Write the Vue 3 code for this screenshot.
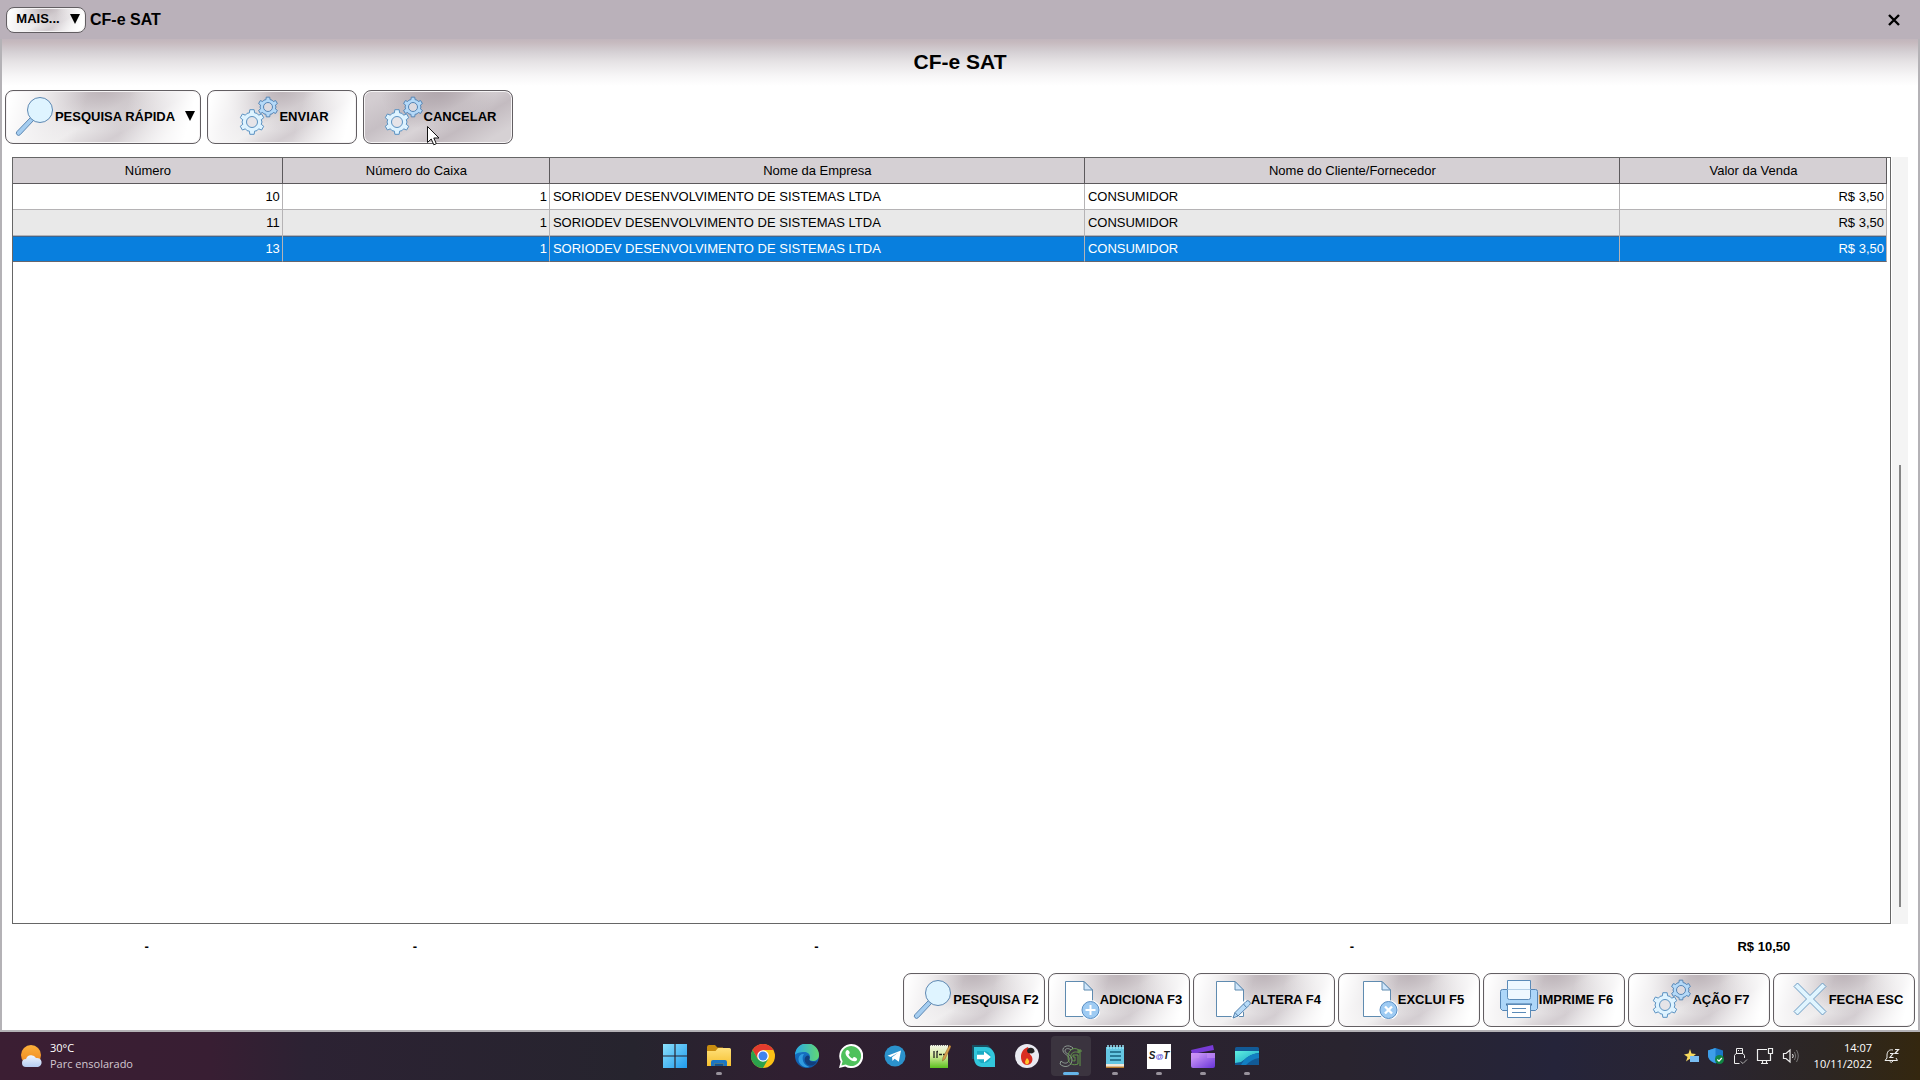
<script setup>
const gear = (cx, cy, r) => {
  const pts = []
  for (let i = 0; i < 6; i++) {
    const base = -90 + i * 60
    for (const [offset, radius] of [[-16, 0.76], [-10, 1], [10, 1], [16, 0.76], [30, 0.8]]) {
      const a = ((base + offset) * Math.PI) / 180
      pts.push(`${(cx + r * radius * Math.cos(a)).toFixed(2)} ${(cy + r * radius * Math.sin(a)).toFixed(2)}`)
    }
  }
  return `M${pts.join('L')}Z`
}

const bigGear = gear(15, 26, 12.5)
const smallGear = gear(31, 11, 10)

const columns = ['Número', 'Número do Caixa', 'Nome da Empresa', 'Nome do Cliente/Fornecedor', 'Valor da Venda']

const rows = [
  { numero: 10, caixa: 1, empresa: 'SORIODEV DESENVOLVIMENTO DE SISTEMAS LTDA', cliente: 'CONSUMIDOR', valor: 'R$ 3,50' },
  { numero: 11, caixa: 1, empresa: 'SORIODEV DESENVOLVIMENTO DE SISTEMAS LTDA', cliente: 'CONSUMIDOR', valor: 'R$ 3,50' },
  { numero: 13, caixa: 1, empresa: 'SORIODEV DESENVOLVIMENTO DE SISTEMAS LTDA', cliente: 'CONSUMIDOR', valor: 'R$ 3,50' },
]
const selected = 13

const totals = ['-', '-', '-', '-', 'R$ 10,50']

const actions = [
  { icon: 'search', label: 'PESQUISA F2' },
  { icon: 'add', label: 'ADICIONA F3' },
  { icon: 'edit', label: 'ALTERA F4' },
  { icon: 'remove', label: 'EXCLUI F5' },
  { icon: 'print', label: 'IMPRIME F6' },
  { icon: 'gears', label: 'AÇÃO F7' },
  { icon: 'close', label: 'FECHA ESC' },
]

const apps = [
  { icon: 'windows', title: 'Iniciar' },
  { icon: 'folder', title: 'Explorador de Arquivos', open: true },
  { icon: 'chrome', title: 'Chrome' },
  { icon: 'edge', title: 'Edge' },
  { icon: 'whatsapp', title: 'WhatsApp' },
  { icon: 'telegram', title: 'Telegram' },
  { icon: 'editor', title: 'Editor' },
  { icon: 'transfer', title: 'Transferir' },
  { icon: 'flame', title: 'Firebird' },
  { icon: 'sg', title: 'Sistema', active: true },
  { icon: 'notepad', title: 'Bloco de Notas', open: true },
  { icon: 'sat', title: 'SAT', open: true },
  { icon: 'clip', title: 'Clipchamp', open: true },
  { icon: 'desktop', title: 'Conexão', open: true },
]
</script>

<template>
  <div class="screen">
    <svg class="sprites" aria-hidden="true">
      <defs>
        <linearGradient id="win" x1="0" y1="0" x2="1" y2="1"><stop offset="0" stop-color="#8be0fb" /><stop offset="1" stop-color="#1f9bee" /></linearGradient>
        <linearGradient id="fold" x1="0" y1="0" x2="0" y2="1"><stop offset="0" stop-color="#ffe07a" /><stop offset="1" stop-color="#f6c02f" /></linearGradient>
        <linearGradient id="edgeA" x1="0" y1="0" x2="1" y2="0"><stop offset="0" stop-color="#28a8e8" /><stop offset="1" stop-color="#62d873" /></linearGradient>
        <linearGradient id="edgeB" x1="0" y1="0" x2="0" y2="1"><stop offset="0" stop-color="#1b7fd0" /><stop offset="1" stop-color="#0d57a6" /></linearGradient>
        <linearGradient id="npp" x1="0" y1="0" x2="0" y2="1"><stop offset="0" stop-color="#f3f6e8" /><stop offset=".45" stop-color="#d9eda0" /><stop offset="1" stop-color="#5cc020" /></linearGradient>
        <linearGradient id="clipG" x1="0" y1="0" x2="1" y2="1"><stop offset="0" stop-color="#dba6fb" /><stop offset="1" stop-color="#6733d8" /></linearGradient>
        <linearGradient id="desk" x1="0" y1="0" x2="1" y2="1"><stop offset="0" stop-color="#5ff0de" /><stop offset="1" stop-color="#16a2cc" /></linearGradient>
        <linearGradient id="sunG" x1="0" y1="0" x2="0" y2="1"><stop offset="0" stop-color="#fbb03a" /><stop offset="1" stop-color="#f0861e" /></linearGradient>
        <linearGradient id="cloudG" x1="0" y1="0" x2="0" y2="1"><stop offset="0" stop-color="#f0f6fe" /><stop offset="1" stop-color="#b5cdf2" /></linearGradient>
      </defs>

      <symbol id="search" viewBox="0 0 42 40">
        <path d="M17.500 21.500 4 35.500a2.200 2.200 0 0 0 3.200 3.200L20.500 24.500Z" fill="#a5cdf0" stroke="#5e88b2" />
        <circle cx="27" cy="14" r="12.500" fill="#dff4ff" stroke="#5e88b2" />
      </symbol>
      <symbol id="gears" viewBox="0 0 42 40">
        <path :d="smallGear" fill="#b4d9f8" stroke="#5585b5" stroke-linejoin="round" />
        <circle cx="31" cy="11" r="4.500" fill="#dcdae0" stroke="#5585b5" />
        <path :d="bigGear" fill="#def3ff" stroke="#5b92c2" stroke-linejoin="round" />
        <circle cx="15" cy="26" r="5.500" fill="#e6e4e8" stroke="#5b92c2" />
      </symbol>
      <symbol id="page" viewBox="0 0 42 40">
        <path d="M7.500 2.500H26L34.500 11V37.500H7.500Z" fill="#fff" stroke="#5f8bb0" />
        <path d="M26 2.500V11H34.500Z" fill="#cfe6fb" stroke="#5f8bb0" />
      </symbol>
      <symbol id="add" viewBox="0 0 42 40">
        <use href="#page" width="42" height="40" />
        <circle cx="32.500" cy="31" r="10" fill="#fff" /><circle cx="32.500" cy="31" r="8.500" fill="#9ecbf3" stroke="#5b8fc4" />
        <path d="M32.500 26V36M27.500 31H37.500" stroke="#fff" stroke-width="2" />
      </symbol>
      <symbol id="remove" viewBox="0 0 42 40">
        <use href="#page" width="42" height="40" />
        <circle cx="32.500" cy="31" r="10" fill="#fff" /><circle cx="32.500" cy="31" r="8.500" fill="#9ecbf3" stroke="#5b8fc4" />
        <path d="M29 27.500 36 34.500M36 27.500 29 34.500" stroke="#fff" stroke-width="2.400" />
      </symbol>
      <symbol id="edit" viewBox="0 0 42 40">
        <use href="#page" width="42" height="40" />
        <path d="M22 40 24 32.500 36.500 20.500 41.500 25.500 29.500 38Z" fill="#fff" />
        <path d="M24 39 26 33.500 37 22.500a2 2 0 0 1 3.500 3.500L29 37Z" fill="#b7dbf8" stroke="#5380ac" />
        <path d="M26 33.500 29 37M34.500 25 37.500 28.500" stroke="#5380ac" />
      </symbol>
      <symbol id="print" viewBox="0 0 42 40">
        <path d="M5.500 10.500H38.500a2 2 0 0 1 2 2V29.500l-2 2H5.500l-2-2V12.500a2 2 0 0 1 2-2Z" fill="#add6f8" stroke="#5585b5" />
        <path d="M10.500 1.500H33.500V18.500a2 2 0 0 1-2 2H12.500a2 2 0 0 1-2-2Z" fill="#eef8ff" stroke="#5b8bb8" />
        <path d="M10.500 10.500H33.500" stroke="#b4cfe6" />
        <path d="M9 25.500H35" stroke="#44719f" stroke-width="2" />
        <path d="M10.500 25.500H33.500V38.500H10.500Z" fill="#fff" stroke="#5b8bb8" />
        <path d="M15 29.500H29M15 33.500H29" stroke="#5b8bb8" />
      </symbol>
      <symbol id="close" viewBox="0 0 42 40">
        <path d="M7 7.500 10.500 4 23 16.500 35.500 4 39 7.500 26.500 20 39 32.500 35.500 36 23 23.500 10.500 36 7 32.500 19.500 20Z" fill="#e0f5ff" stroke="#6d9cc3" stroke-linejoin="round" />
      </symbol>

      <symbol id="windows" viewBox="0 0 24 24"><path d="M0 0H11.400V11.400H0ZM12.600 0H24V11.400H12.600ZM0 12.600H11.400V24H0ZM12.600 12.600H24V24H12.600Z" fill="url(#win)" /></symbol>
      <symbol id="folder" viewBox="0 0 24 24">
        <path d="M0 3a2 2 0 0 1 2-2H8l2.500 2.500H16V8H0Z" fill="#c98d10" />
        <path d="M0 7H8.500L11 4H22.500A1.500 1.500 0 0 1 24 5.500V22H0Z" fill="url(#fold)" />
        <path d="M4 22V18a2 2 0 0 1 2-2H18a2 2 0 0 1 2 2v4H16.500V19.500H7.500V22Z" fill="#1b76c4" /><path d="M7.500 19.500H16.500V22H7.500Z" fill="#115490" />
      </symbol>
      <symbol id="chrome" viewBox="0 0 24 24">
        <circle cx="12" cy="12" r="12" fill="#fbc116" />
        <path d="M1.600 6A12 12 0 0 1 22.400 6H12L6.800 15Z" fill="#e33b2e" />
        <path d="M1.600 6A12 12 0 0 0 12 24L17.200 15 12 17 6.800 15Z" fill="#2ba24c" />
        <circle cx="12" cy="12" r="5.800" fill="#fff" /><circle cx="12" cy="12" r="4.500" fill="#3f83ee" />
      </symbol>
      <symbol id="edge" viewBox="0 0 24 24">
        <circle cx="12" cy="12" r="12" fill="url(#edgeB)" />
        <path d="M0 11A12 12 0 0 1 24 11.500C24 15 21 17 18 17c-3 0-4-1.200-3.500-2.300C16 12 14 8 9.500 8 5 8 1 9 0 11Z" fill="url(#edgeA)" />
        <path d="M9 10c-3 4-1 11 5.500 13C9 24.500 3 20 3.500 14.500 4 11 6.500 9.500 9 10Z" fill="#2f9be0" />
        <path d="M14.500 14.700C13.500 16.500 16 18.500 22 17.500 20 21 17 22 14.500 21.500 9 20 8 13 12.500 11.500c2 0 2.500 2 2 3.200Z" fill="#123f7c" />
      </symbol>
      <symbol id="whatsapp" viewBox="0 0 24 24">
        <path d="M0 24 1.700 17.800A12 12 0 1 1 6.200 22.400Z" fill="#fff" />
        <path d="M2.400 21.600 3.600 17.300A10 10 0 1 1 6.800 20.500Z" fill="#4fc15c" />
        <path d="M8.300 6c-3 1.300-2 5.200 1.200 8.300 3.200 3.300 7.300 4.200 8.600 1.400.5-1.400-2.800-3-3.400-2.600l-1.100 1.400c-1.500-.4-3.600-2.400-4.100-4l1.200-1.300C11 8.500 9.700 5.700 8.300 6Z" fill="#fff" />
      </symbol>
      <symbol id="telegram" viewBox="0 0 24 24"><circle cx="12" cy="12" r="10.500" fill="#2b92cc" /><path d="M4.500 11.700 18 6.500 15.800 17.800 11.600 14.800 9.500 17 9 13.300 15 8.700 7.700 12.900Z" fill="#fff" /></symbol>
      <symbol id="editor" viewBox="0 0 24 24">
        <path d="M3 1H21V24H3Z" fill="url(#npp)" /><path d="M3 1.500H20" stroke="#777" stroke-dasharray="1 1" />
        <path d="M7 7V14M10 7V14M12 10.500H15M16 10.500H18M10 7.500H11" stroke="#222" stroke-width="1.300" />
        <path d="M22.500 1 24 2.500 18 15 15.500 17 16 13.500Z" fill="#d9a04f" stroke="#84551f" stroke-width=".5" />
      </symbol>
      <symbol id="transfer" viewBox="0 0 24 24">
        <path d="M1 1H17L22 7V15H1Z" fill="#174e60" /><path d="M3 3H15C20 3 24 8 24 13V23H11C6 23 3 19 3 14Z" fill="#32c7dc" />
        <path d="M6 7H14C17 7 20 11 20 13S17 19 14 19H10L6 15Z" fill="#1aacc5" /><path d="M6 10.800H13V7.500L20 13 13 18.500V15.200H6Z" fill="#fff" />
      </symbol>
      <symbol id="flame" viewBox="0 0 24 24">
        <circle cx="12" cy="12" r="12" fill="#e9eaf1" />
        <path d="M13 3C7 5 6 10 6 13c0 5 3 8 6 8 4 0 6.500-4 5-8-1-3-3-2-2-5Z" fill="#d92d21" />
        <path d="M12 20.500c-3-1-2-4 0-6.500 2 2 3.500 4.500 0 6.500Z" fill="#ffc62e" /><path d="M12 7c0-3 3-4 5-3 2 .5 2.500 2 2.500 4L17 9.500 13 9Z" fill="#222" />
      </symbol>
      <symbol id="sg" viewBox="0 0 24 24">
        <g fill="none"><path d="M14 4C10 0 3 2 4 7c1 4 7 4 6 9-1 4-5 4-8 1l-1 3c5 5 12 2 12-4 0-6-7-6-7-9 0-3 4-3 6-1Z" stroke="#8d9a91" /><path d="M20 6C14 2 9 7 9 13c0 7 5 9 10 7V11H14V13H16V17C12 17 11 14 12 11 13 8 17 7 20 9ZM21 5V22M18 7H23" stroke="#62964b" /></g>
      </symbol>
      <symbol id="notepad" viewBox="0 0 24 24">
        <path d="M3 3H21V21H3Z" fill="#65c7e3" /><path d="M3 20H21V24H3Z" fill="#f2e8d8" /><path d="M3 23.300H21" stroke="#b87929" stroke-width="1.400" />
        <path d="M5 1V5M8 1V5M11 1V5M14 1V5M17 1V5M20 1V5" stroke="#9be2f5" stroke-width="1.500" />
        <path d="M7 8H18M7 12H18M7 16H18" stroke="#17627f" stroke-width="1.600" />
      </symbol>
      <symbol id="clip" viewBox="0 0 24 24">
        <path d="M0 6 22 1 23 6 1 10Z" fill="#783bd6" /><path d="M0 9H24V22a2 2 0 0 1-2 2H2a2 2 0 0 1-2-2Z" fill="url(#clipG)" />
        <path d="M0 9H8V14H0ZM16 9H24V14H16Z" fill="#c58cf5" opacity=".6" />
      </symbol>
      <symbol id="desktop" viewBox="0 0 24 24">
        <path d="M0 4.500A1.500 1.500 0 0 1 1.500 3H22.500A1.500 1.500 0 0 1 24 4.500V21H0Z" fill="#125a96" />
        <path d="M0 7H24V9C14 10 11 15 6 18L0 19Z" fill="url(#desk)" /><path d="M6 21C10 13 17 9 24 9.500V14C18 15 14 18 11 21Z" fill="#127fc2" />
      </symbol>
    </svg>

    <main class="window">
      <header class="titlebar">
        <button class="btn more" type="button">MAIS... <svg class="caret" viewBox="0 0 10 10"><path d="M0 0H10L5 10Z" /></svg></button>
        <span class="caption">CF-e SAT</span>
        <button class="exit" type="button" aria-label="Fechar">
          <svg viewBox="0 0 12 12"><path d="M1 1 11 11M11 1 1 11" fill="none" stroke="#000" stroke-width="2.400" /></svg>
        </button>
      </header>
      <h1>CF-e SAT</h1>

      <nav class="toolbar">
        <button class="btn quick" type="button">
          <svg class="icon"><use href="#search" /></svg>PESQUISA RÁPIDA
          <svg class="caret" viewBox="0 0 10 10"><path d="M0 0H10L5 10Z" /></svg>
        </button>
        <button class="btn tool" type="button"><svg class="icon"><use href="#gears" /></svg>ENVIAR</button>
        <button class="btn tool hover" type="button">
          <svg class="icon"><use href="#gears" /></svg>CANCELAR
          <svg class="pointer" viewBox="0 0 13 20"><path d="M.5.500V16.500L4.200 13 6.800 18.800 9.300 17.700 6.800 12H12Z" fill="#fff" stroke="#111" /></svg>
        </button>
      </nav>

      <section class="data">
        <div class="grid">
          <table>
            <colgroup><col class="first"><col class="narrow"><col class="wide"><col class="wide"><col></colgroup>
            <thead><tr><th v-for="c in columns" :key="c" scope="col">{{ c }}</th></tr></thead>
            <tbody>
              <tr v-for="r in rows" :key="r.numero" :class="{ selected: r.numero === selected }">
                <td class="num">{{ r.numero }}</td>
                <td class="num">{{ r.caixa }}</td>
                <td>{{ r.empresa }}</td>
                <td>{{ r.cliente }}</td>
                <td class="num">{{ r.valor }}</td>
              </tr>
            </tbody>
          </table>
        </div>
        <div class="track"><div class="thumb"></div></div>
      </section>

      <div class="totals"><span v-for="(t, i) in totals" :key="i">{{ t }}</span></div>

      <footer class="actions">
        <button v-for="a in actions" :key="a.label" class="btn action" type="button">
          <svg class="icon"><use :href="'#' + a.icon" /></svg>{{ a.label }}
        </button>
      </footer>
    </main>

    <div class="taskbar">
      <div class="weather">
        <svg viewBox="0 0 24 24"><circle cx="11" cy="11" r="10" fill="url(#sunG)" /><path d="M6 23a4 4 0 0 1 0-8 5.500 5.500 0 0 1 10-1 4.600 4.600 0 0 1 2 9Z" fill="url(#cloudG)" /></svg>
        <p>30°C<br><span>Parc ensolarado</span></p>
      </div>
      <div class="apps">
        <button v-for="a in apps" :key="a.icon" type="button" :aria-label="a.title" :class="['app', { open: a.open, active: a.active }]">
          <span v-if="a.icon === 'sat'" class="sat">S<b>@</b>T</span>
          <svg v-else><use :href="'#' + a.icon" /></svg>
        </button>
      </div>
      <div class="tray">
        <svg class="t1" viewBox="0 0 16 16"><path d="M6 1 7.500 5.500 12 6 8.500 9 9.500 14 5.500 11 2 13.500 3.500 9 0 6.500 4.500 5.500Z" fill="#f6d95e" /><path d="M6 8H15V14H6Z" fill="#78bdf2" /></svg>
        <svg class="t2" viewBox="0 0 16 16"><path d="M7.500 0 15 2.500V7c0 4-3 7-7.500 8.500C3 14 0 11 0 7V2.500Z" fill="#1b78c8" /><path d="M7.500 0V15C3 13.500 0 11 0 7V2.500Z" fill="#3d9ee8" /><circle cx="11.500" cy="11.500" r="4.500" fill="#108643" /><path d="M9.300 11.500 11 13.200 13.800 10" fill="none" stroke="#fff" stroke-width="1.200" /></svg>
        <svg class="t3" viewBox="0 0 16 18"><g fill="none" stroke="#eee"><path d="M4.500 6.500V1.500H10.500V6.500M7.500 16.500H2.500V8.500L4 6.500H11L12.500 8.500V11M6 3.500H7M8.500 3.500H9.500" /><path d="M8.500 14.500 11 16.500 15 12.500" stroke="#aaa" /></g></svg>
        <svg class="t4" viewBox="0 0 18 18"><path d="M11 2.500H1.500V13.500H14.500V9M5 16.500H12M6.500 13.500V16M10.500 13.500V16M12.500 1.500H16.500V6.500H12.500ZM14.500 6.500V9" fill="none" stroke="#eee" stroke-width="1.200" /></svg>
        <svg class="t5" viewBox="0 0 18 16"><g fill="none" stroke="#eee"><path d="M1.500 5.500H4L8 2V14L4 10.500H1.500Z" stroke-width="1.200" /><path d="M10.500 6Q12 8 10.500 10" /><path d="M12.500 4Q15 8 12.500 12M14.500 2Q18 8 14.500 14" stroke="#777" /></g></svg>
        <p class="clock">14:07<br>10/11/2022</p>
        <svg class="t6" viewBox="0 0 16 16"><g fill="none" stroke="#eee"><path d="M9 2C5 1 3 4 3 7V10L1 12.500H13.500L12 10M5.500 13Q7 16 9 13" /><path d="M6 5.500H9L6 9.500H9.500M11 1.500H14.500L11 5.500H14.500" stroke-width="1.200" /></g></svg>
      </div>
    </div>
  </div>
</template>

<style>
body { margin: 0; }
</style>

<style scoped>
.screen {
  display: flex;
  flex-direction: column;
  min-height: 100vh;
  font-family: "Liberation Sans", Arial, sans-serif;
  font-size: 13px;
  color: #000;
}
.sprites { position: absolute; width: 0; height: 0; }
.window {
  flex: 1;
  display: flex;
  flex-direction: column;
  box-sizing: border-box;
  border: 2px solid #b4b2b6;
  border-top: 0;
  background: linear-gradient(#bab1ba 0, #bab1ba 34px, #c6b9be 42px, #d5d0d4 52px, #e6e3e5 62px, #f7f6f7 76px, #fff 86px) #fff;
}
.titlebar {
  display: flex;
  align-items: center;
  gap: 4px;
  height: 39px;
  margin: 0 -2px;
  padding: 0 20px 0 6px;
  background: #bab1ba;
  box-sizing: border-box;
}
.caption { font-size: 16px; font-weight: 700; }
.exit {
  margin-left: auto;
  width: 12px;
  height: 12px;
  padding: 0;
  border: 0;
  background: none;
}
.exit svg { display: block; width: 12px; height: 12px; }
h1 {
  margin: 0;
  height: 24px;
  padding: 11px 0 16px;
  font-size: 21px;
  line-height: 24px;
  text-align: center;
}
.btn {
  position: relative;
  display: flex;
  align-items: center;
  justify-content: center;
  box-sizing: border-box;
  border: 1px solid #625e62;
  border-radius: 8px;
  padding: 0 0 2px 2px;
  font: 700 13px "Liberation Sans", Arial, sans-serif;
  color: #000;
  white-space: nowrap;
  background:
    linear-gradient(105deg, #fff 3%, #ffffff00 40%, #ffffff00 60%, #fff 92%),
    radial-gradient(ellipse at 50% 0, #bdb4b9 0, #bdb4b900 55%),
    linear-gradient(150deg, #dedadd 30%, #ebe9ea 48%, #d3cdd1 66%, #e6e3e5 85%);
  box-shadow: inset 0 0 0 1px #f6f4f5;
}
.hover {
  background:
    radial-gradient(ellipse at 50% 0, #b1a7ad 0, #b1a7ad00 55%),
    linear-gradient(150deg, #d3cdd1 10%, #c6bfc4 32%, #d9d4d7 50%, #c3bbc0 68%, #d6d1d4 88%);
}
.icon { width: 42px; height: 40px; flex: none; }
.caret { width: 10px; height: 10px; }
.more {
  width: 80px;
  height: 26px;
  gap: 10px;
  padding-left: 4px;
}
.toolbar { display: flex; gap: 6px; padding: 0 3px; }
.toolbar .btn { height: 54px; }
.quick { width: 196px; }
.quick .caret { margin-left: 10px; }
.tool { width: 150px; }
.pointer { position: absolute; left: 63px; top: 35px; width: 13px; height: 20px; z-index: 1; }
.data {
  flex: 1;
  display: flex;
  min-height: 300px;
  margin: 13px 10px 0;
}
.grid {
  flex: 1;
  border: 1px solid #666;
  padding-right: 3px;
  background: #fff;
}
table {
  width: 100%;
  table-layout: fixed;
  border-collapse: separate;
  border-spacing: 0;
}
.first { width: 14.4%; }
.narrow { width: 14.25%; }
.wide { width: 28.55%; }
th, td {
  box-sizing: border-box;
  height: 26px;
  padding: 0 2px 0 3px;
  font-weight: 400;
  text-align: left;
  white-space: nowrap;
  overflow: hidden;
}
th {
  background: #d5d0d4;
  border-right: 1px solid #5c595c;
  border-bottom: 1px solid #5c595c;
  text-align: center;
}
td { border-right: 1px solid #b5b3b5; border-bottom: 1px solid #b5b3b5; }
td.num { text-align: right; }
tbody tr:nth-child(even) { background: #e9e9e9; }
tbody .selected { background: #087fde; color: #fff; }
.selected td { border-bottom-color: #66666e; box-shadow: inset 0 1px #3e6690; }
.track {
  width: 16px;
  margin-left: 1px;
  background: #f4f4f4;
  display: flex;
  flex-direction: column;
  align-items: center;
  justify-content: flex-end;
  padding-bottom: 17px;
  box-sizing: border-box;
}
.thumb { width: 2px; height: 59%; background: #868686; }
.totals {
  display: grid;
  grid-template-columns: 269fr 267fr 535fr 535fr 288fr;
  margin: 0 10px;
  padding: 14px 0 18px;
  line-height: 17px;
  text-align: center;
  font-weight: 700;
}
.actions {
  display: flex;
  flex-wrap: wrap;
  justify-content: flex-end;
  gap: 3px;
  padding: 0 3px 3px;
}
.action { width: 142px; height: 54px; }
.taskbar {
  display: grid;
  grid-template-columns: 1fr auto 1fr;
  align-items: center;
  height: 48px;
  color: #fff;
  font: 11px/16px "Open Sans", "Noto Sans", sans-serif;
  background: linear-gradient(90deg, #3b1e33 0, #381e33 11%, #2c2233 16%, #26242e 33%, #301f31 41%, #2b2130 55%, #29242f 70%, #25243a 81%, #2a2531 89%, #2c2623 95%, #34270f 100%);
}
.taskbar p { margin: 0; }
.weather { display: flex; align-items: center; gap: 6px; padding-left: 20px; }
.weather svg { width: 24px; height: 24px; }
.weather span { color: #d3c8d1; }
.apps { display: flex; gap: 4px; padding-left: 2px; }
.app {
  position: relative;
  display: grid;
  place-items: center;
  width: 40px;
  height: 40px;
  padding: 0;
  border: 0;
  border-radius: 4px;
  background: none;
}
.app svg { width: 24px; height: 24px; }
.sat {
  width: 24px;
  background: #fff;
  color: #222;
  font: italic 700 10px/24px "Liberation Sans", Arial, sans-serif;
  text-align: center;
}
.sat b { font-size: 8px; color: #4a42d8; }
.open::after, .active::after {
  content: "";
  position: absolute;
  bottom: 1px;
  width: 6px;
  height: 3px;
  border-radius: 2px;
  background: #98929c;
}
.active { background: #3b343f; }
.active::after { width: 16px; background: #65b5ea; }
.tray { display: flex; align-items: center; justify-content: flex-end; padding-right: 20px; }
.t1, .t2, .t3, .t5, .t6 { width: 16px; height: 16px; }
.t3, .t4 { height: 18px; }
.t4, .t5 { width: 18px; }
.t2, .t3, .t4, .t5 { margin-left: 8px; }
.clock { width: 72px; text-align: right; }
.t6 { margin-left: 12px; }
</style>
